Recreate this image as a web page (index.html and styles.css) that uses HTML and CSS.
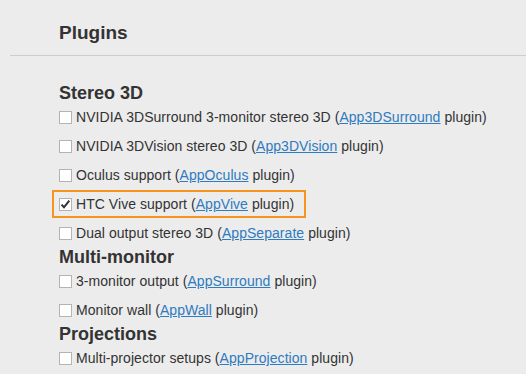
FILE: index.html
```html
<!DOCTYPE html>
<html lang="en">
<head>
    <meta charset="UTF-8">
    <meta name="viewport" content="width=device-width, initial-scale=1.0">
    <title>Plugins</title>
    <link rel="stylesheet" href="styles.css">
</head>
<body>
    <div class="header">
        <h1>Plugins</h1>
    </div>

    <div class="content">
        <h2>Stereo 3D</h2>
        <div class="options">
            <label class="option"><span class="box"></span><span>NVIDIA 3DSurround 3-monitor stereo 3D (<a href="#">App3DSurround</a> plugin)</span></label>
            <label class="option"><span class="box"></span><span>NVIDIA 3DVision stereo 3D (<a href="#">App3DVision</a> plugin)</span></label>
            <label class="option"><span class="box"></span><span>Oculus support (<a href="#">AppOculus</a> plugin)</span></label>
            <label class="option option-highlight"><span class="box"><svg width="11" height="11" viewBox="0 0 11 11"><path d="M1.5 5.6 L4 8.3 L9.3 1.6" fill="none" stroke="#333" stroke-width="2"/></svg></span><span>HTC Vive support (<a href="#">AppVive</a> plugin)</span></label>
            <label class="option"><span class="box"></span><span>Dual output stereo 3D (<a href="#">AppSeparate</a> plugin)</span></label>
        </div>

        <h2>Multi-monitor</h2>
        <div class="options">
            <label class="option"><span class="box"></span><span>3-monitor output (<a href="#">AppSurround</a> plugin)</span></label>
            <label class="option"><span class="box"></span><span>Monitor wall (<a href="#">AppWall</a> plugin)</span></label>
        </div>

        <h2>Projections</h2>
        <div class="options">
            <label class="option"><span class="box"></span><span>Multi-projector setups (<a href="#">AppProjection</a> plugin)</span></label>
        </div>
    </div>
</body>
</html>
```

FILE: styles.css
```css
body { margin: 0; background: #ececec; color: #333; font-family: "Liberation Sans", Arial, sans-serif; }
.header { margin-left: 10px; padding: 22px 0 11px 49px; border-bottom: 1px solid #cdcdcd; }
.header h1 { margin: 0; font-size: 19px; line-height: 22px; font-weight: bold; }
.content { display: flex; flex-direction: column; gap: 3px; padding: 26px 0 0 59px; }
.content h2 { margin: 0; font-size: 18px; line-height: 22px; font-weight: bold; }
.options { display: flex; flex-direction: column; gap: 9px; }
.option { display: flex; align-items: flex-start; font-size: 14px; line-height: 20px; letter-spacing: 0.05px; white-space: nowrap; }
.option a { color: #2f7bbf; text-decoration: underline; }
.box { display: flex; align-items: center; justify-content: center; flex: none; box-sizing: border-box; width: 13px; height: 13px; margin: 4px 4px 0 0; background: white; border: 1px solid #b3b3b3; }
.option-highlight { align-self: flex-start; margin: -4px 0 -4px -7px; padding: 2px 10px 2px 5px; border: 2px solid #f7941d; }
```
